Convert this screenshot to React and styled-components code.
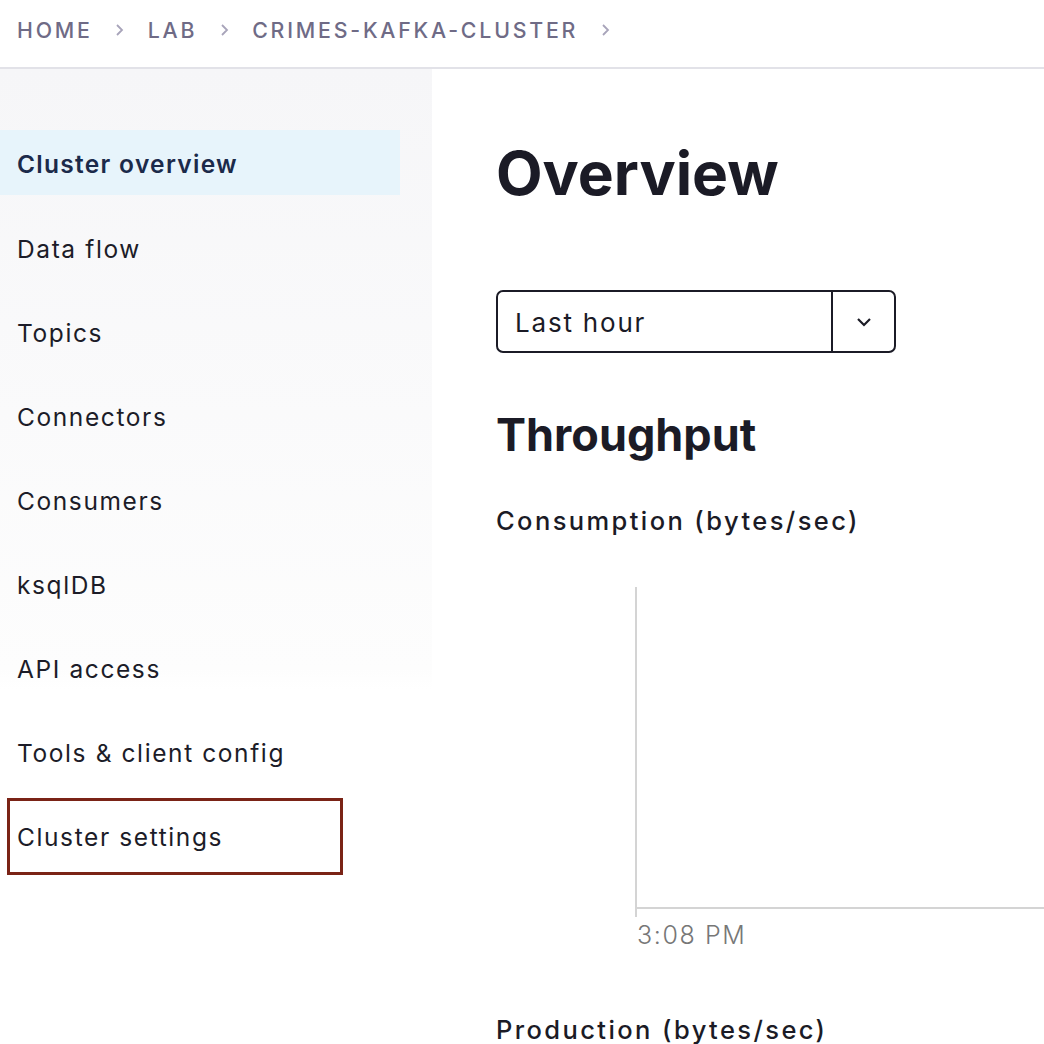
import React from "react";
import styled, { createGlobalStyle } from "styled-components";

const Global = createGlobalStyle`
  html, body { margin: 0; padding: 0; background: #fff; }
  body { font-family: Inter, "Noto Sans", sans-serif; color: #1c1c28; }
  * { box-sizing: border-box; }
`;

const Page = styled.div`
  width: 1044px;
  height: 1044px;
  overflow: hidden;
  display: flex;
  flex-direction: column;
`;

const Header = styled.header`
  height: 69px;
  flex: none;
  border-bottom: 2px solid #e2e2e8;
  display: flex;
  align-items: center;
  padding: 0 0 7px 17px;
`;

const Crumb = styled.span`
  font-size: 21.3px;
  font-weight: 500;
  letter-spacing: 2.8px;
  color: #6f6b86;
  text-transform: uppercase;
`;

const Sep = styled.span`
  display: inline-flex;
  width: 57px;
  margin-left: -2px;
  justify-content: center;
  color: #a8a4ba;
`;

const Body = styled.div`
  flex: 1;
  display: flex;
  min-height: 0;
`;

const Sidebar = styled.nav`
  width: 432px;
  flex: none;
  padding: 61px 32px 0 0;
  background: linear-gradient(to bottom, #f6f6f8 0px, #fdfdfd 600px, #ffffff 620px);
  background-repeat: no-repeat;
  background-size: 100% 620px;
  display: flex;
  flex-direction: column;
  gap: 19px;
  & > * { flex-shrink: 0; }
`;

const NavItem = styled.div`
  height: 65px;
  display: flex;
  align-items: center;
  padding: ${(p) => (p.$active ? "2px" : "5px")} 0 0 17px;
  font-size: 24.5px;
  letter-spacing: ${(p) => (p.$active ? "1.3px" : "1.6px")};
  font-weight: ${(p) => (p.$active ? 600 : 400)};
  color: ${(p) => (p.$active ? "#1b2a4a" : "#1c1c28")};
  background: ${(p) => (p.$active ? "#e7f4fb" : "transparent")};
  position: relative;
`;

const Highlight = styled.span`
  position: absolute;
  left: 7px;
  top: -4px;
  width: 336px;
  height: 77px;
  border: 3px solid #7a2316;
`;

const Main = styled.main`
  flex: 1;
  padding: 64px 0 0 496px;
  margin-left: -432px;
  display: flex;
  flex-direction: column;
  min-width: 0;
  & > * { flex-shrink: 0; }
`;

const Title = styled.h1`
  margin: 0;
  font-size: 60.5px;
  font-weight: 700;
  color: #1b1b26;
  line-height: 80px;
`;

const Select = styled.div`
  margin-top: 77px;
  width: 400px;
  height: 63px;
  border: 2px solid #1b1b26;
  border-radius: 7px;
  display: flex;
  align-items: stretch;
`;

const SelectValue = styled.div`
  flex: 1;
  display: flex;
  align-items: center;
  padding: 2px 0 0 17px;
  font-size: 26px;
  letter-spacing: 1.8px;
  color: #1b1b26;
  border-right: 2px solid #1b1b26;
`;

const SelectBtn = styled.div`
  width: 61px;
  display: flex;
  align-items: center;
  justify-content: center;
`;

const H2 = styled.h2`
  margin: 52px 0 0;
  font-size: 45px;
  font-weight: 700;
  line-height: 60px;
  color: #1b1b26;
`;

const H3 = styled.h3`
  margin: 36px 0 0;
  font-size: 25.5px;
  font-weight: 500;
  letter-spacing: 2.4px;
  line-height: 40px;
  color: #1b1b26;
`;

const Chart = styled.div`
  margin: 46px 0 0 139px;
  height: 330px;
  position: relative;
  border-left: 2px solid #d4d4d4;
`;

const XAxis = styled.div`
  position: absolute;
  left: 0;
  right: 0;
  top: 320px;
  border-top: 2px solid #d4d4d4;
`;

const TickLabel = styled.div`
  position: absolute;
  left: 0;
  top: 333px;
  font-size: 25px;
  font-weight: 300;
  color: #777;
  letter-spacing: 1.6px;
  white-space: nowrap;
  line-height: 30px;
`;

const H3b = styled(H3)`
  margin-top: 93px;
`;

const nav = [
  "Cluster overview",
  "Data flow",
  "Topics",
  "Connectors",
  "Consumers",
  "ksqlDB",
  "API access",
  "Tools & client config",
  "Cluster settings",
];

const Chevron = () => (
  <svg width="12" height="16" viewBox="0 0 12 16">
    <path d="M4 3 L9 8 L4 13" fill="none" stroke="currentColor" strokeWidth="1.8" />
  </svg>
);

export default function App() {
  return (
    <Page>
      <Global />
      <Header>
        <Crumb>Home</Crumb>
        <Sep>
          <Chevron />
        </Sep>
        <Crumb>Lab</Crumb>
        <Sep>
          <Chevron />
        </Sep>
        <Crumb>crimes-kafka-cluster</Crumb>
        <Sep>
          <Chevron />
        </Sep>
      </Header>
      <Body>
        <Sidebar>
          {nav.map((n, i) => (
            <NavItem key={n} $active={i === 0}>
              {n}
              {n === "Cluster settings" && <Highlight />}
            </NavItem>
          ))}
        </Sidebar>
        <Main>
          <Title>Overview</Title>
          <Select>
            <SelectValue>Last hour</SelectValue>
            <SelectBtn>
              <svg width="18" height="12" viewBox="0 0 18 12">
                <path d="M3 3 L9 9 L15 3" fill="none" stroke="#1b1b26" strokeWidth="2.2" />
              </svg>
            </SelectBtn>
          </Select>
          <H2>Throughput</H2>
          <H3>Consumption (bytes/sec)</H3>
          <Chart>
            <XAxis />
            <TickLabel>3:08 PM</TickLabel>
          </Chart>
          <H3b>Production (bytes/sec)</H3b>
        </Main>
      </Body>
    </Page>
  );
}
